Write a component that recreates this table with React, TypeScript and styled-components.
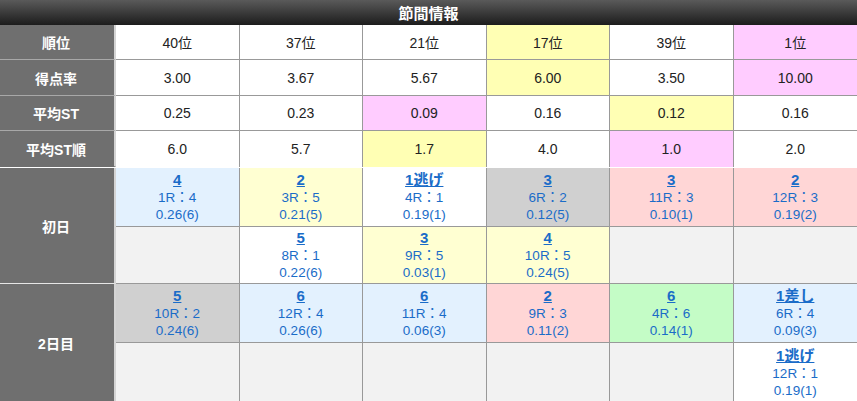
import React from 'react';
import styled, { createGlobalStyle } from 'styled-components';

const GlobalStyle = createGlobalStyle`
  body {
    margin: 0;
    background: #ffffff;
    font-family: "Liberation Sans", "Noto Sans CJK JP", sans-serif;
  }
`;

const Wrapper = styled.div`
  width: 857px;
  background: #ffffff;
`;

const TitleBar = styled.div`
  height: 25px;
  display: flex;
  align-items: center;
  justify-content: center;
  background: linear-gradient(#5a5a5a, #1c1c1c);
  color: #ffffff;
  font-size: 15px;
  font-weight: bold;
`;

const Grid = styled.div<{ rows: string }>`
  display: grid;
  grid-template-columns: 116px repeat(6, 1fr);
  grid-template-rows: ${(p) => p.rows};
`;

const Label = styled.div<{ span?: number; line?: string }>`
  grid-row: span ${(p) => p.span || 1};
  background: #6f6f6f;
  color: #ffffff;
  font-size: 14px;
  font-weight: bold;
  display: flex;
  align-items: center;
  justify-content: center;
  border-right: 2px solid #d4d4d4;
  border-bottom: 1px solid ${(p) => p.line || '#a8a8a8'};
  box-sizing: border-box;
  padding-right: 2px;
`;

const Cell = styled.div<{ bg?: string; last?: boolean; noBottom?: boolean }>`
  background: ${(p) => p.bg || '#ffffff'};
  color: #222222;
  font-size: 14px;
  display: flex;
  align-items: center;
  justify-content: center;
  border-right: ${(p) => (p.last ? 'none' : '1px solid #999999')};
  border-bottom: ${(p) => (p.noBottom ? 'none' : '1px solid #999999')};
  box-sizing: border-box;
`;

const RaceCell = styled(Cell)`
  flex-direction: column;
  color: #1a6cc8;
  font-size: 13.5px;
  line-height: 17px;
`;

const Result = styled.a`
  color: #1a6cc8;
  font-weight: bold;
  font-size: 15px;
  text-decoration: underline;
  line-height: 18px;
`;

const Spacer = styled.div`
  height: 1px;
  background: #ffffff;
`;

const YELLOW = '#ffffb4';
const PINK = '#ffccff';
const C = {
  blue: '#e3f1fe',
  yellow: '#ffffd2',
  white: '#ffffff',
  gray: '#d0d0d0',
  red: '#ffd6d6',
  green: '#c4fcc6',
  empty: '#f2f2f2',
};

type Stat = [string, string?];

const stats: { label: string; cells: Stat[] }[] = [
  { label: '順位', cells: [['40位'], ['37位'], ['21位'], ['17位', YELLOW], ['39位'], ['1位', PINK]] },
  { label: '得点率', cells: [['3.00'], ['3.67'], ['5.67'], ['6.00', YELLOW], ['3.50'], ['10.00', PINK]] },
  { label: '平均ST', cells: [['0.25'], ['0.23'], ['0.09', PINK], ['0.16'], ['0.12', YELLOW], ['0.16']] },
  { label: '平均ST順', cells: [['6.0'], ['5.7'], ['1.7', YELLOW], ['4.0'], ['1.0', PINK], ['2.0']] },
];

type Race = { bg: string; result?: string; race?: string; st?: string };

const days: { label: string; rows: string; cells: Race[][] }[] = [
  {
    label: '初日',
    rows: '59px 57px',
    cells: [
      [
        { bg: C.blue, result: '4', race: '1R：4', st: '0.26(6)' },
        { bg: C.yellow, result: '2', race: '3R：5', st: '0.21(5)' },
        { bg: C.white, result: '1逃げ', race: '4R：1', st: '0.19(1)' },
        { bg: C.gray, result: '3', race: '6R：2', st: '0.12(5)' },
        { bg: C.red, result: '3', race: '11R：3', st: '0.10(1)' },
        { bg: C.red, result: '2', race: '12R：3', st: '0.19(2)' },
      ],
      [
        { bg: C.empty },
        { bg: C.white, result: '5', race: '8R：1', st: '0.22(6)' },
        { bg: C.yellow, result: '3', race: '9R：5', st: '0.03(1)' },
        { bg: C.yellow, result: '4', race: '10R：5', st: '0.24(5)' },
        { bg: C.empty },
        { bg: C.empty },
      ],
    ],
  },
  {
    label: '2日目',
    rows: '59px 60px',
    cells: [
      [
        { bg: C.gray, result: '5', race: '10R：2', st: '0.24(6)' },
        { bg: C.blue, result: '6', race: '12R：4', st: '0.26(6)' },
        { bg: C.blue, result: '6', race: '11R：4', st: '0.06(3)' },
        { bg: C.red, result: '2', race: '9R：3', st: '0.11(2)' },
        { bg: C.green, result: '6', race: '4R：6', st: '0.14(1)' },
        { bg: C.blue, result: '1差し', race: '6R：4', st: '0.09(3)' },
      ],
      [
        { bg: C.empty },
        { bg: C.empty },
        { bg: C.empty },
        { bg: C.empty },
        { bg: C.empty },
        { bg: C.white, result: '1逃げ', race: '12R：1', st: '0.19(1)' },
      ],
    ],
  },
];

export default function App() {
  return (
    <Wrapper>
      <GlobalStyle />
      <TitleBar>節間情報</TitleBar>
      <Grid rows="35px 36px 35px 36px">
        {stats.map((row, r) => (
          <React.Fragment key={row.label}>
            <Label line={r === stats.length - 1 ? 'transparent' : undefined}>{row.label}</Label>
            {row.cells.map(([text, bg], i) => (
              <Cell key={i} bg={bg} last={i === 5} noBottom={r === stats.length - 1}>
                {text}
              </Cell>
            ))}
          </React.Fragment>
        ))}
      </Grid>
      <Spacer />
      {days.map((day) => (
        <Grid key={day.label} rows={day.rows}>
          <Label span={2} line="#e6e6e6">
            {day.label}
          </Label>
          {day.cells.map((cells, r) =>
            cells.map((c, i) => (
              <RaceCell key={`${r}-${i}`} bg={c.bg} last={i === 5}>
                {c.result && <Result href="#">{c.result}</Result>}
                {c.race && <span>{c.race}</span>}
                {c.st && <span>{c.st}</span>}
              </RaceCell>
            ))
          )}
        </Grid>
      ))}
    </Wrapper>
  );
}
